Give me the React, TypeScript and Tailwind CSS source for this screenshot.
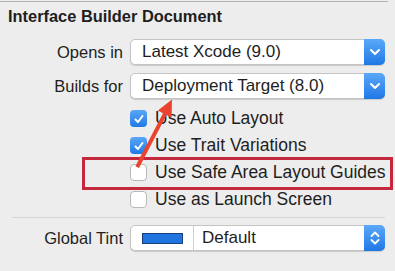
import React from "react";

function Chevron() {
  return (
    <svg width="12" height="8" viewBox="0 0 12 8">
      <path d="M2 2 L6 6 L10 2" fill="none" stroke="white" strokeWidth="2" strokeLinecap="round" strokeLinejoin="round" />
    </svg>
  );
}

function Stepper() {
  return (
    <svg width="12" height="16" viewBox="0 0 12 16">
      <path d="M2.5 6 L6 2.5 L9.5 6" fill="none" stroke="white" strokeWidth="1.8" strokeLinecap="round" strokeLinejoin="round" />
      <path d="M2.5 10 L6 13.5 L9.5 10" fill="none" stroke="white" strokeWidth="1.8" strokeLinecap="round" strokeLinejoin="round" />
    </svg>
  );
}

function Popup({ text }: { text: string }) {
  return (
    <div className="ml-[7px] flex h-[26px] w-[255px] rounded-[5px] border border-[#c4c4c4] bg-white shadow-[0_1px_1px_rgba(0,0,0,0.15)]">
      <div className="flex flex-1 items-center pl-[11px] text-[17px] text-[#1e1e1e]">{text}</div>
      <div className="my-[-1px] mr-[-1px] flex w-[21px] items-center justify-center rounded-r-[5px] bg-gradient-to-b from-[#5aa8f8] to-[#1d78e6]">
        <Chevron />
      </div>
    </div>
  );
}

function Check({ checked, text }: { checked: boolean; text: string }) {
  return (
    <div className="flex h-[27px] items-center pl-[130px]">
      {checked ? (
        <div className="flex h-[17px] w-[17px] items-center justify-center rounded-[4px] bg-gradient-to-b from-[#58a6f7] to-[#1f79e4]">
          <svg width="12" height="12" viewBox="0 0 12 12">
            <path d="M2.5 6.5 L5 9 L9.5 3" fill="none" stroke="white" strokeWidth="2" strokeLinecap="round" strokeLinejoin="round" />
          </svg>
        </div>
      ) : (
        <div className="h-[17px] w-[17px] rounded-[4px] border border-[#b9b9b9] bg-white" />
      )}
      <div className="ml-[8px] text-[17.5px] text-[#1e1e1e]">{text}</div>
    </div>
  );
}

export default function App() {
  return (
    <div className="relative h-[271px] w-[395px] overflow-hidden bg-[#ededed] font-['Liberation_Sans',Arial,sans-serif]">
      <div className="pt-[1px]">
        <div className="h-[1px] w-[388px] bg-[#b4b4b4]" />
      </div>
      <div className="flex h-[29px] items-center pl-[8px] text-[16.4px] font-bold text-[#1e1e1e]">
        Interface Builder Document
      </div>
      <div className="pt-[8px]">
        <div className="flex h-[26px] items-center">
          <div className="w-[123px] text-right text-[16.5px] text-[#1e1e1e]">Opens in</div>
          <Popup text="Latest Xcode (9.0)" />
        </div>
        <div className="mt-[8px] flex h-[26px] items-center">
          <div className="w-[123px] text-right text-[16.5px] text-[#1e1e1e]">Builds for</div>
          <Popup text="Deployment Target (8.0)" />
        </div>
        <div className="mt-[6px]">
          <Check checked text="Use Auto Layout" />
          <Check checked text="Use Trait Variations" />
          <Check checked={false} text="Use Safe Area Layout Guides" />
          <Check checked={false} text="Use as Launch Screen" />
        </div>
        <div className="ml-[12px] mt-[4px] h-[1px] w-[373px] bg-[#d6d6d6]" />
        <div className="mt-[7px] flex h-[26px] items-center">
          <div className="w-[123px] text-right text-[16.5px] text-[#1e1e1e]">Global Tint</div>
          <div className="ml-[7px] flex h-[26px] w-[255px] rounded-[5px] border border-[#c4c4c4] bg-white shadow-[0_1px_1px_rgba(0,0,0,0.15)]">
            <div className="flex w-[63px] items-center justify-center border-r border-[#cfcfcf]">
              <div className="h-[11px] w-[41px] border border-[#1b3f7a] bg-[#1f74e0]" />
            </div>
            <div className="flex flex-1 items-center pl-[8px] text-[17px] text-[#1e1e1e]">Default</div>
            <div className="my-[-1px] mr-[-1px] flex w-[21px] items-center justify-center rounded-r-[5px] bg-gradient-to-b from-[#5aa8f8] to-[#1d78e6]">
              <Stepper />
            </div>
          </div>
        </div>
      </div>

      <div className="pointer-events-none absolute left-[82px] top-[157px] h-[33px] w-[311px] border-[3px] border-[#c4283c]" />

      <svg className="pointer-events-none absolute left-0 top-0" width="395" height="271" viewBox="0 0 395 271">
        <polygon
          points="139,168 135.4,166.2 163,113.2 157.8,110.6 172,99.5 171.6,117.8 166.6,115"
          fill="#ea4430"
        />
      </svg>
    </div>
  );
}
